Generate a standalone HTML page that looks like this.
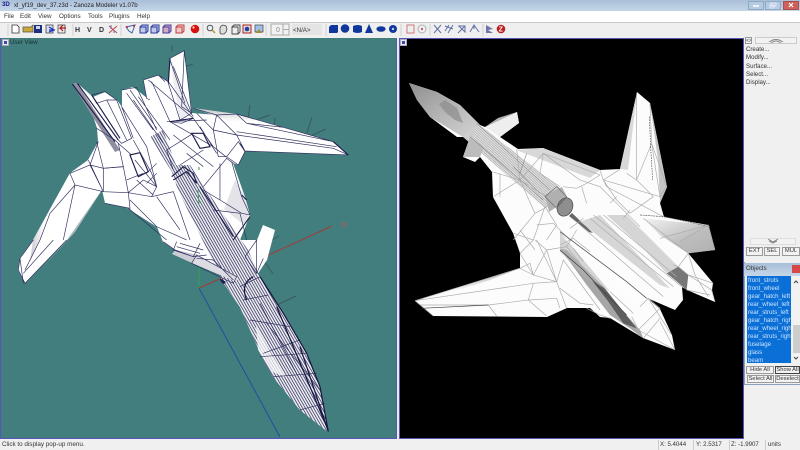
<!DOCTYPE html>
<html><head><meta charset="utf-8">
<style>
html,body{margin:0;padding:0;width:800px;height:450px;overflow:hidden;background:#f0f0f0}
body{position:relative;font-family:"Liberation Sans",sans-serif;color:#222}
#w{position:absolute;left:0;top:0;width:800px;height:450px;overflow:hidden;filter:blur(.3px);background:#f0f0f0}
.a{position:absolute}
.t{position:absolute;font-size:6.1px;line-height:8px;white-space:nowrap;color:#333}
.m{font-size:6.3px}
.b{position:absolute;background:#f2f2f2;border:1px solid #9a9a9a;box-sizing:border-box;font-size:5.8px;line-height:6px;text-align:center;color:#333;white-space:nowrap;overflow:hidden}
</style></head><body><div id="w">
<div class="a" style="left:0;top:0;width:800px;height:11px;background:linear-gradient(#a9bfd8,#c4d5e8)"></div>
<div class="a" style="left:0;top:11px;width:800px;height:11px;background:#fff"></div>
<div class="a" style="left:0;top:22px;width:800px;height:1px;background:#c8c8c8"></div>
<div class="a" style="left:0;top:23px;width:800px;height:15px;background:#efefef"></div>
<div class="t" style="left:2px;top:1px;font-weight:bold;color:#1a1a90">3D</div>
<div class="t" style="left:14px;top:2px;color:#222">xl_yf19_dev_37.z3d - Zanoza Modeler v1.07b</div>
<div class="t m" style="left:4px;top:13px">File</div><div class="t m" style="left:20px;top:13px">Edit</div><div class="t m" style="left:38px;top:13px">View</div><div class="t m" style="left:59px;top:13px">Options</div><div class="t m" style="left:88px;top:13px">Tools</div><div class="t m" style="left:109px;top:13px">Plugins</div><div class="t m" style="left:137px;top:13px">Help</div>
<div class="a" style="left:748px;top:1px;width:16px;height:9px;background:#b4cbe2;border:1px solid #8fa8c4;box-sizing:border-box"></div>
<div class="a" style="left:765px;top:1px;width:16px;height:9px;background:#b4cbe2;border:1px solid #8fa8c4;box-sizing:border-box"></div>
<div class="a" style="left:783px;top:1px;width:16px;height:9px;background:#d0605a;border:1px solid #a85050;box-sizing:border-box"></div>
<svg class="a" style="left:0;top:0" width="800" height="38" viewBox="0 0 800 38">
<g stroke="#fff" fill="none"><path d="M753 6h6" stroke-width="1.5"/><path d="M771 3h5v3h-5zM770 5h4v3h-4z" stroke="#eef" stroke-width=".8"/><path d="M789 3l4 4M793 3l-4 4" stroke-width="1.2"/></g>
<g stroke="#d0d0d0"><path d="M8 24v12M73 24v12M121 24v12M203 24v12M266 24v12M326 24v12M401 24v12M430 24v12M483 24v12"/></g>
<path d="M12 25h5l2 2v6h-7z" fill="#fff" stroke="#333" stroke-width=".8"/>
<path d="M23 27h8l2-2v7h-10z" fill="#c8a83a" stroke="#554" stroke-width=".7"/>
<rect x="34" y="25" width="8" height="8" fill="#1e2f80"/><rect x="36" y="26" width="4" height="3" fill="#cfd6e8"/>
<rect x="46" y="25" width="7" height="8" fill="#dde" stroke="#333" stroke-width=".7"/><path d="M49 30h6M49 27l5 3-5 2" stroke="#1533b8" stroke-width="1.2" fill="none"/>
<rect x="58" y="25" width="7" height="8" fill="#eee" stroke="#333" stroke-width=".7"/><path d="M66 28h-6l3-3M60 28l3 3" stroke="#b01818" stroke-width="1.2" fill="none"/>
<text x="75" y="32" font-family="Liberation Sans" font-weight="bold" font-size="7" fill="#333">H</text>
<text x="87" y="32" font-family="Liberation Sans" font-weight="bold" font-size="7" fill="#333">V</text>
<text x="99" y="32" font-family="Liberation Sans" font-weight="bold" font-size="7" fill="#333">D</text>
<path d="M109 26l8 7M117 26l-8 7" stroke="#c05050" stroke-width="1.1"/><path d="M111 25v4M114 30v3" stroke="#6a6ab0"/>
<path d="M126 27l9-2-3 8-3-2z" fill="none" stroke="#4060a8" stroke-width="1"/><circle cx="127" cy="27" r="1" fill="#c03030"/><circle cx="134" cy="26" r="1" fill="#c03030"/>
<g fill="#c0c8e8" stroke="#2a3c9c" stroke-width="1"><path d="M140 27h6v6h-6zM140 27l2-2h6v6l-2 2"/><path d="M151 27h6v6h-6zM151 27l2-2h6v6l-2 2"/></g>
<path d="M163 27h6v6h-6zM163 27l2-2h6v6l-2 2" fill="#d0a8c0" stroke="#4a3c9c"/>
<path d="M176 27h6v6h-6zM176 27l2-2h6v6l-2 2" fill="#f0c8c8" stroke="#c04040"/>
<circle cx="195" cy="29" r="4.3" fill="#d81010"/><circle cx="193.5" cy="27.5" r="1.2" fill="#ffc0a0"/>
<circle cx="210" cy="28" r="2.8" fill="#e8eef8" stroke="#555"/><path d="M212 30l3 3" stroke="#b89030" stroke-width="1.4"/>
<path d="M220 33v-5l1-2 2-1 3 1 1 3-1 3-2 2h-3z" fill="#ddd" stroke="#444" stroke-width=".8"/>
<path d="M232 27h6v7h-6zM232 27l2-2h6v7l-2 2" fill="#eee" stroke="#444" stroke-width=".9"/>
<rect x="243" y="25" width="8" height="8" fill="#ddd" stroke="#b02020"/><circle cx="247" cy="29" r="2.3" fill="#2040a0"/>
<rect x="255" y="25" width="8" height="7" fill="#9cc0e8" stroke="#444" stroke-width=".7"/><path d="M256 33l3-4 3 4" fill="#a88a30"/>
<rect x="271" y="24" width="18" height="11" fill="#f2f2f2" stroke="#aaa"/><path d="M283 24v11M283 29.5h6" stroke="#aaa"/>
<text x="276" y="32" font-family="Liberation Sans" font-size="7" fill="#888">0</text>
<rect x="292" y="24" width="30" height="11" fill="#e4e4e4"/>
<text x="293" y="32" font-family="Liberation Sans" font-size="6.2" fill="#333">&lt;N/A&gt;</text>
<g fill="#10389c"><path d="M329 27l2-2h7v7l-1 1h-8z"/><circle cx="345" cy="28.5" r="4.3"/><path d="M353 26q5-2 9 0v6q-4 2-9 0z"/><path d="M369 24l4 9h-8z"/><ellipse cx="381" cy="29" rx="4.6" ry="2.8"/><circle cx="393" cy="29" r="4"/></g>
<circle cx="393" cy="29" r="1.2" fill="#b8c8f0"/>
<rect x="407" y="25" width="7" height="8" fill="none" stroke="#d07878"/><circle cx="422" cy="29" r="4" fill="none" stroke="#b0b0c0"/><circle cx="422" cy="29" r="1.1" fill="#d05050"/>
<g fill="none" stroke="#6070a8" stroke-width="1"><path d="M434 25l7 8M441 25l-7 8"/><path d="M445 26l8 3M453 25l-5 8M445 31l4-6"/><path d="M458 26h7v6l-6-6M458 33l7-7"/><path d="M470 32l4-7 5 7M474 25v4"/></g>
<path d="M486 25l7 4-5 1 5 3h-7z" fill="#6c74a8"/>
<circle cx="501" cy="29" r="4.3" fill="#b82020"/><text x="498.6" y="31.6" font-family="Liberation Sans" font-weight="bold" font-size="7" fill="#fff">Z</text>
</svg>

<svg class="a" style="left:0;top:38px" width="800" height="402" viewBox="0 38 800 402">
<defs>
<linearGradient id="wl" x1="0" y1="0" x2="1" y2="0"><stop offset="0" stop-color="#b8b8c4"/><stop offset=".35" stop-color="#fff"/></linearGradient>
<linearGradient id="wr" x1="0" y1="0" x2="0" y2="1"><stop offset="0" stop-color="#c4c4c8"/><stop offset=".4" stop-color="#fff"/></linearGradient>
<linearGradient id="rr" x1="0" y1="0" x2="0" y2="1"><stop offset="0" stop-color="#b0b0b0"/><stop offset=".7" stop-color="#fafafa"/></linearGradient>
<linearGradient id="fin" x1="0" y1="0" x2="1" y2="1"><stop offset="0" stop-color="#f4f4f4"/><stop offset=".6" stop-color="#bdbdbd"/><stop offset="1" stop-color="#b0b0b0"/></linearGradient>
<linearGradient id="nz" x1="0" y1="0" x2="1" y2="1"><stop offset="0" stop-color="#8e8e8e"/><stop offset=".5" stop-color="#b4b4b4"/><stop offset="1" stop-color="#d4d4d4"/></linearGradient>
<pattern id="st" width="2.4" height="2.4" patternUnits="userSpaceOnUse" patternTransform="rotate(-30)"><rect width="2.4" height="2.4" fill="#eeeef4"/><rect width=".75" height="2.4" fill="#2e2e58"/></pattern>
<pattern id="sg" width="1.8" height="1.8" patternUnits="userSpaceOnUse" patternTransform="rotate(-48)"><rect width="1.8" height="1.8" fill="#e2e2e2"/><rect width=".5" height="1.8" fill="#999"/></pattern>
<clipPath id="nose"><path d="M150 137L163 130 176 165 190 165 205 188 248 250 260 277 283 313 307 353 320 387 328 432 300 410 273 377 262 357 240 307 222 280 205 245 178 190 172 172z"/></clipPath>
</defs>
<rect x="1" y="38" width="396" height="401" fill="#437e7e"/>
<rect x="399" y="38" width="345" height="401" fill="#000"/>
<path d="M0.5 38V438.5H396.5V38M399.5 38V438.5H743.5V38.5H399" fill="none" stroke="#5656b8"/>
<path d="M397 38h2v402h-2z" fill="#ececec"/>
<g stroke-width="1" fill="none">
<path d="M199 288L280 437" stroke="#1f4fa0"/>
<path d="M199 288L199 265" stroke="#30a050"/>
<path d="M199 288L222 278M262 258L332 226" stroke="#a03c3c"/>
<path d="M342 222l5 5M347 222l-5 5" stroke="#a06060"/>
<g stroke="#3a5a5a"><path d="M172 52v-6M187 66l6-2M250 105l-2 14M270 115l-14 5M275 118l-1 14M312 117l-5 16M326 129l-18 8M262 258l11 16M277 305l19-9M272 240l7-4"/></g>
</g>
<!-- left plane -->
<path d="M170 58L184 51 192 113 217 115 237 114 283 127 333 142 348 155 245 151 238 165 233 163 245 197 250 215 240 240 257 240 263 225 275 230 267 260 257 275 260 277 283 313 307 353 320 387 328 432 300 410 273 377 262 357 240 307 220 278 237 282 192 263 197 255 175 250 163 242 157 227 127 208 105 203 102 190 67 240 25 283 18 270 20 258 33 240 70 173 88 160 98 142 97 128 92 113 72 84 77 83 93 97 105 92 117 100 122 107 122 90 133 87 147 98 143 80 158 75 168 82z" fill="#fff"/>
<path d="M33 240L70 173 50 215 30 262z" fill="url(#wl)" opacity=".8"/>
<path d="M40 270L67 240 102 190 75 232z" fill="#d8d8e0" opacity=".7"/>
<path d="M193 108L237 114 283 127 333 142 300 142 240 125z" fill="url(#wr)"/>
<path d="M72 84L77 83 120 150 115 152z" fill="#8e8ea0"/>
<path d="M235 180l10 17 5 18-6 10-20-16z" fill="#e4e4e8"/>
<path d="M176 70L190 113 180 122 170 58z" fill="#eeeef2"/>
<g clip-path="url(#nose)"><rect x="130" y="130" width="210" height="310" fill="url(#st)"/></g>
<path d="M256 325l16 30 14 22 -14-5-14-22z" fill="#fff" opacity=".7"/>
<path d="M192 263L197 255 237 276 237 282z" fill="#dcdce2"/>
<path d="M175 250l22 5-5 8-20-9z" fill="#ccccd6"/>
<g fill="none" stroke="#2e2e5e" stroke-width="2" transform="translate(0,40) scale(.3333)">
<path d="M510 55L553 32 575 220 540 240 505 130zM510 60L555 190M553 32L545 200 575 220M520 80L575 220"/>
<path d="M430 120L475 105 505 125 580 230M445 120L580 235M450 180L440 175 430 120M475 105L495 125M455 125L510 245 580 235M510 245L545 250 580 235"/>
<path d="M580 205L650 225 710 222 850 262 1000 305 1045 345 735 333 720 310M650 225L710 285 735 333M710 222L740 250 850 262M710 285L1000 325 1045 345M710 275L1010 320M740 250L1000 305M650 225L640 270 655 350 680 350 715 375 735 335 715 305 680 350M640 270L710 285M640 270L590 220"/>
<path d="M580 235L640 320 680 352M600 260L650 340M510 245L640 320M500 245L620 240M580 280L500 330 520 390M610 330L540 375M520 285L640 380M560 340L610 380"/>
<path d="M365 150L410 142 470 270M365 200L440 320 470 440M380 160L460 270M390 150L470 265M400 180L490 310M415 170L510 300"/>
<path d="M275 165L315 155 350 180 395 295 365 310 355 300M320 180L350 180M275 165L290 190 320 180 380 300M290 265L345 300 355 310 370 380 310 385 290 305M365 200L400 295"/>
<path d="M355 310L395 345M400 300L455 400 470 440"/>
<path d="M310 455L385 458 390 505 315 490M385 458L455 470 470 440 430 420 385 458M310 385L370 380 385 458 310 455 310 385 270 375 295 305M270 375L310 455M270 375L210 400 225 435 310 455M225 435L150 520 120 600M225 435L190 600M265 360L310 455"/>
<path d="M385 505L500 600M390 480L470 560 560 600M455 470L520 455 570 600M470 470L540 570M440 430L470 400M410 420L460 465"/>
<path d="M610 440L680 355 700 370M660 370L660 480 725 520 750 525M610 450L660 480M695 365L725 470 750 525M640 510L720 520 740 600"/>
<path d="M380 420L430 400M405 360L470 440M440 400L470 370"/>
<path d="M232 130L355 300M217 132L345 305M275 165L360 295M390 345L420 338 445 395 415 410zM575 280L610 280 630 320 600 325zM700 600L750 530M725 465L740 480M510 55L505 130M1000 305L1045 345M515 410L550 380 580 400 590 430M520 420L560 395 590 430M600 440L700 590M580 235L510 245" stroke="#1c1c4c" stroke-width="3.4"/>
</g>
<g fill="none" stroke="#2e2e5e" stroke-width="2" transform="translate(0,240) scale(.3333)">
<path d="M200 0L75 130 55 90 60 55 100 0M60 55L70 130M160 0L70 100M120 0L75 90"/>
<path d="M490 5L525 30 580 50 620 45M530 5L520 30 580 50 600 10M540 10L610 30M530 20L600 40"/>
<path d="M575 70L590 45 710 110 700 130zM590 55L640 60 700 120"/>
<path d="M735 50L770 0M790 55L770 100 735 50M770 0L770 100"/>
<path d="M720 140L780 110M730 180L805 165M780 350L920 340M820 410L950 400M900 510L975 490M750 240L870 260M790 340L900 300M800 250L960 450M780 190L900 420" />
<path d="M780 110L850 220 920 340 960 440 985 575M760 110Q720 130 740 180M900 320L985 575M830 200L980 560" stroke="#14143e" stroke-width="3.6"/>
</g>
<path d="M220 278a4 5 -30 0 0 4 6l2-2z" fill="#20204c"/>
<path d="M199 167v3M198 190l1 15" stroke="#50a868" stroke-width="1.2"/>
<!-- right plane -->
<path d="M409 83L437 92 460 105 480 125 485 127 517 112 519 123 500 137 518 149 543 148 600 170 620 169 637 92 650 103 667 187 660 203 664 217 708 225 715 250 688 253 713 283 712 290 715 302 687 290 682 287 683 300 675 310 647 298 660 309 672 335 675 350 643 338 610 318 600 317 590 308 567 308 547 317 433 316 415 301 520 268 520 253 513 233 493 197 492 172 480 157 475 162 463 157 470 137 457 137 430 117 417 100z" fill="#fcfcfc"/>
<path d="M409 83L437 92 460 105 480 125 463 137 430 117 417 100z" fill="url(#nz)"/>
<path d="M445 100l12 8 6 15-8-3-10-8-6-8z" fill="#8c8c8c" opacity=".7"/>
<path d="M463 137L480 125 565 192 545 208z" fill="url(#sg)"/>
<path d="M485 127L517 112 519 123 500 137z" fill="#eee"/>
<path d="M485 127L517 112 498 118z" fill="#b4b4b4"/>
<path d="M463 157L470 137 484 147 480 157z" fill="#bcbcbc"/>
<path d="M620 169L637 92 628 170z" fill="#d8d8d8"/>
<path d="M650 103L667 187 660 203 658 160z" fill="#c4c4c4"/>
<path d="M543 148L600 170 590 178 516 150z" fill="#d8d8d8"/>
<path d="M415 301L520 268 490 280 440 296z" fill="url(#rr)"/>
<path d="M545 195l17-8 6 12-19 13z" fill="#b0b0b0"/>
<ellipse cx="565" cy="207" rx="7.5" ry="9.5" transform="rotate(25 565 207)" fill="#8e8e8e" stroke="#444" stroke-width=".7"/>
<path d="M572 213l21 20-4-1-20-16z" fill="#666"/>
<g transform="translate(560,215) scale(.3333)">
<path d="M250 10L445 30 465 105 385 115 300 60z" fill="url(#fin)"/>
<path d="M140 0L200 0 355 155 320 175 250 100z" fill="#d0d0d0" opacity=".9"/>
<path d="M60 20L120 0 330 220 300 210z" fill="#cfcfcf" opacity=".85"/>
<path d="M0 100L20 105 130 215 190 290 240 345 250 370 210 340 150 300 80 210z" fill="#a6a6a6"/>
<path d="M95 195L130 215 190 290 230 340 190 325 145 260z" fill="#5e5e5e"/>
<path d="M320 175L355 155 385 180 380 225 345 195z" fill="#777"/>
<path d="M0 50L50 110 150 230 80 190 0 110z" fill="#b4b4b4" opacity=".55"/>
<path d="M0 60L50 95 260 250 240 275 230 262z" fill="#fdfdfd" opacity=".95"/>
</g>
<g fill="none" stroke="#ababab" stroke-width="2" transform="translate(400,40) scale(.3333)">
<path d="M275 395L360 420 350 328M280 470L360 420 405 520M360 420L430 340M430 340L420 400 480 440M430 340L540 420M430 340L600 405M600 405L560 430 530 445 490 440M600 390L610 420 660 388M610 420L780 470 800 440M610 420L620 440 790 530M680 400L710 420 710 160M710 420L755 310 750 190M755 310L800 440M755 310L780 470M710 420L760 470 690 520 650 480 610 420M300 400L300 470M360 420L440 470M405 520L340 600M405 520L480 480M400 600L435 500 470 555M540 420L600 440 720 560M545 440L560 490M630 490L650 470M690 510L670 535M410 555L460 550 510 600M470 555L440 600"/>
<path d="M230 250L450 450M210 290L430 480M360 400L380 340M340 380L420 460" stroke="#8e8e8e"/>
<path d="M435 470L470 440 500 470 470 505zM470 500L500 470" stroke="#666"/>
<path d="M748 230L752 320M752 320L758 420" stroke="#555" stroke-dasharray="5 3"/>
<path d="M720 525L790 530M792 530L930 560" stroke="#666" stroke-dasharray="6 2"/>
</g>
<g fill="none" stroke="#ababab" stroke-width="2" transform="translate(400,230) scale(.3333)">
<path d="M45 212L360 115 400 135 470 155M45 212L400 160 470 155 500 235M400 160L385 210 265 225 290 258M385 210L440 258M385 210L470 205 480 235M360 70L400 135 390 100 360 115M400 135L440 60 470 155 490 90 600 240M410 30L470 155M45 212L100 258M60 225L265 225"/>
<path d="M65 235L265 225" stroke="#444"/>
<path d="M340 10L400 30 360 70M360 0L405 60M405 30L440 60M440 60L500 50 540 100M500 50L530 0"/>
</g>
<g fill="none" stroke="#aaa" stroke-width="2" transform="translate(560,215) scale(.3333)">
<path d="M60 30L310 245M90 10L340 215M100 0L365 215M130 0L350 185M30 40L70 10M0 90L40 70 90 110M250 10L385 115M300 70L445 30 465 105M360 80L445 30M385 115L355 155 385 180 460 205M385 115L405 180 445 245M355 155L340 150M385 180L455 225 465 260M380 225L450 240M240 275L265 250 300 280 235 345 215 305M265 250L335 360M235 345L345 405M300 310L250 370M300 320L345 405M150 310L120 300 80 280M0 220L60 265 100 270M150 230L220 295M40 100L70 140"/>
<path d="M0 105L70 165 140 240 200 300" stroke="#444" stroke-width="2.4"/>
<path d="M0 50L60 95 200 200 260 250" stroke="#555" stroke-width="2.4"/>
</g>
</svg>

<div class="a" style="left:2px;top:39px;width:7px;height:7px;background:#e8e8f8;border:1px solid #aab;box-sizing:border-box"></div>
<div class="a" style="left:4px;top:41px;width:3px;height:3px;background:#4048a8"></div>
<div class="a" style="left:400px;top:39px;width:7px;height:7px;background:#e8e8f8;border:1px solid #aab;box-sizing:border-box"></div>
<div class="a" style="left:402px;top:41px;width:3px;height:3px;background:#4048a8"></div>
<div class="t" style="left:10px;top:39px;color:#15302f">User View</div>

<!-- right panel -->
<div class="a" style="left:744px;top:38px;width:56px;height:402px;background:#f0f0f0"></div>
<div class="b" style="left:745px;top:37px;width:7px;height:7px;font-size:5px">&lt;&gt;</div>
<div class="b" style="left:755px;top:37px;width:42px;height:7px;font-size:5px;border-color:#ccc"></div>
<svg class="a" style="left:768px;top:38px" width="16" height="5"><path d="M1 4q7-5 14 0M3 5q5-4 10 0" fill="none" stroke="#888"/></svg>
<div class="t" style="left:746px;top:46px">Create...</div>
<div class="t" style="left:746px;top:54px">Modify...</div>
<div class="t" style="left:746px;top:63px">Surface...</div>
<div class="t" style="left:746px;top:71px">Select...</div>
<div class="t" style="left:746px;top:79px">Display...</div>
<div class="b" style="left:750px;top:238px;width:46px;height:7px;border-color:#ddd"></div>
<svg class="a" style="left:767px;top:238px" width="12" height="6"><path d="M1 1l5 3 5-3M2 3l4 2 4-2" fill="none" stroke="#888"/></svg>
<div class="b" style="left:746px;top:247px;width:17px;height:9px;line-height:7px">EXT</div>
<div class="b" style="left:764px;top:247px;width:16px;height:9px;line-height:7px">SEL</div>
<div class="b" style="left:782px;top:247px;width:18px;height:9px;line-height:7px">MUL</div>
<div class="a" style="left:744px;top:262px;width:56px;height:123px;background:#f0f0f0;border-left:1px solid #8ca0bc;border-bottom:1px solid #8ca0bc;box-sizing:border-box"></div>
<div class="a" style="left:744px;top:263px;width:56px;height:13px;background:linear-gradient(#a8bfd9,#c6d6e8)"></div>
<div class="t" style="left:746px;top:265px">Objects</div>
<div class="a" style="left:792px;top:265px;width:8px;height:8px;background:#d84848"></div>
<div class="a" style="left:747px;top:276px;width:44px;height:87px;background:#0a6fd6;overflow:hidden">
<div class="t" style="left:1px;top:1px;color:#cfe6ff">front_struts</div>
<div class="t" style="left:1px;top:9px;color:#cfe6ff">front_wheel</div>
<div class="t" style="left:1px;top:17px;color:#cfe6ff">gear_hatch_left</div>
<div class="t" style="left:1px;top:25px;color:#cfe6ff">rear_wheel_left</div>
<div class="t" style="left:1px;top:33px;color:#cfe6ff">rear_struts_left</div>
<div class="t" style="left:1px;top:41px;color:#cfe6ff">gear_hatch_right</div>
<div class="t" style="left:1px;top:49px;color:#cfe6ff">rear_wheel_right</div>
<div class="t" style="left:1px;top:57px;color:#cfe6ff">rear_struts_right</div>
<div class="t" style="left:1px;top:65px;color:#cfe6ff">fuselage</div>
<div class="t" style="left:1px;top:73px;color:#cfe6ff">glass</div>
<div class="t" style="left:1px;top:81px;color:#cfe6ff">beam</div>
</div>
<div class="a" style="left:792px;top:276px;width:8px;height:87px;background:#f2f2f2"></div>
<div class="a" style="left:793px;top:325px;width:7px;height:28px;background:#cdcdcd"></div>
<svg class="a" style="left:792px;top:277px" width="8" height="86"><path d="M2 6l2-2 2 2M2 80l2 2 2-2" fill="none" stroke="#444"/></svg>
<div class="b" style="left:746px;top:366px;width:28px;height:8px">Hide All</div>
<div class="b" style="left:775px;top:366px;width:25px;height:8px;border-color:#444">Show All</div>
<div class="b" style="left:747px;top:375px;width:27px;height:8px">Select All</div>
<div class="b" style="left:775px;top:375px;width:25px;height:8px">Deselect</div>

<!-- status -->
<div class="a" style="left:0;top:440px;width:800px;height:10px;background:#f0f0f0"></div>
<div class="t m" style="left:2px;top:441px">Click to display pop-up menu.</div>
<div class="a" style="left:658px;top:440px;width:1px;height:10px;background:#ccc"></div>
<div class="a" style="left:693px;top:440px;width:1px;height:10px;background:#ccc"></div>
<div class="a" style="left:729px;top:440px;width:1px;height:10px;background:#ccc"></div>
<div class="a" style="left:765px;top:440px;width:1px;height:10px;background:#ccc"></div>
<div class="t" style="left:660px;top:441px">X: 5.4044</div>
<div class="t" style="left:696px;top:441px">Y: 2.5317</div>
<div class="t" style="left:731px;top:441px">Z: -1.9907</div>
<div class="t" style="left:768px;top:441px">units</div>
</div></body></html>
